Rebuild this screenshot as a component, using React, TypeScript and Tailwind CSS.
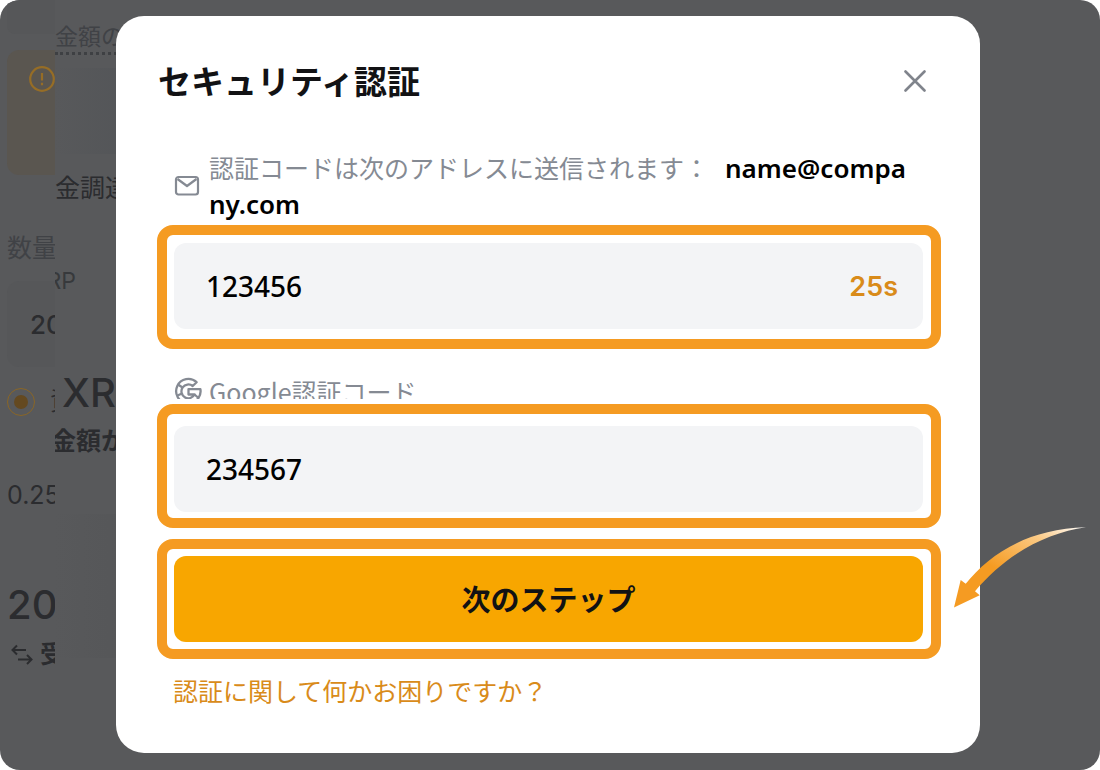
import React from "react";
import type { ReactNode } from "react";

interface HighlightProps {
  className?: string;
  children: ReactNode;
}

const Highlight: React.FC<HighlightProps> = ({ className, children }) => (
  <div
    className={`relative rounded-2xl border-10 border-[#f59b22] pr-2 pl-[7px] ${className ?? ""}`}
  >
    {children}
  </div>
);

const MailIcon = () => (
  <svg width="26" height="22" viewBox="0 0 26 22" fill="none" stroke="#858a93" strokeWidth="2.2" aria-hidden>
    <rect x="2" y="3" width="22" height="17.5" rx="2.5" />
    <path d="M3.500 5l9.500 7L22.500 5" strokeLinejoin="round" />
  </svg>
);

const GoogleIcon = () => (
  <svg width="28" height="28" viewBox="0 0 28 28" fill="none" stroke="#858a93" strokeWidth="2.300" aria-hidden>
    <path
      d="M22.600 5.200A12.200 12.200 0 1 0 26.400 12.200H14.500v5.300h6A6.900 6.900 0 1 1 18.700 9z"
      strokeLinejoin="round"
    />
    <path d="M4 7.500l4.500 3M3.500 18.500l4.500-2M20.500 17.500l4 3.500" />
  </svg>
);

const CloseIcon = () => (
  <svg width="22" height="22" viewBox="0 0 22 22" fill="none" stroke="#80848c" strokeWidth="2.6" strokeLinecap="round" aria-hidden>
    <path d="M1.500 1.500l19 19M20.500 1.500l-19 19" />
  </svg>
);

const SwapIcon = () => (
  <svg width="22" height="22" viewBox="0 0 22 22" fill="none" stroke="#2b2c2f" strokeWidth="2" aria-hidden>
    <path d="M15 6H2M6 1.500L1.500 6 6 10.500M7 15.500h13M16 11l4.500 4.500L16 20" />
  </svg>
);

const PointerArrow = () => (
  <svg
    className="absolute -top-[22px] left-full ml-[23px]"
    width="132"
    height="82"
    viewBox="0 0 132 82"
    aria-hidden
  >
    <defs>
      <linearGradient id="arrow" x1="0" y1="1" x2="1" y2="0">
        <stop offset="0.4" stopColor="#f59b22" />
        <stop offset="0.75" stopColor="#fbc983" />
        <stop offset="1" stopColor="#ffffff" />
      </linearGradient>
    </defs>
    <path
      fill="url(#arrow)"
      d="M0 80.500L6.700 53l5 3.700C35 28 72 2 132 .3 92 6 52 27 21 64.300l4.700 4z"
    />
  </svg>
);

// the order form that stays visible, dimmed, behind the dialog
const DimmedPage = () => (
  <div
    className="absolute inset-0 flex overflow-hidden rounded-[20px] font-['Inter','Noto_Sans_CJK_JP',sans-serif] whitespace-nowrap text-[#2b2c2f]"
    aria-hidden
  >
    <div className="w-[55px] shrink-0 overflow-hidden pl-[7px]">
      <div className="h-[34px] rounded-bl-lg bg-[#565759]" />
      <div className="mt-4 h-[125px] rounded-l-xl bg-[#5a5650] pt-4 pl-[22px]">
        <svg width="26" height="26" viewBox="0 0 26 26" fill="none" stroke="#966d26" strokeWidth="2.2">
          <circle cx="13" cy="13" r="11.800" />
          <path d="M13 7v7.500M13 16.800v2.400" />
        </svg>
      </div>
      <p className="mt-[55px] text-[25px] leading-9 text-[#404246]">数量</p>
      <div className="mt-[15px] flex h-[86px] items-center rounded-l-xl bg-[#565759] pl-[23px] text-[26px] font-medium">
        20
      </div>
      <label className="mt-[21px] flex h-7 items-center gap-[15px] text-[25px]">
        <input
          type="radio"
          defaultChecked
          tabIndex={-1}
          className="flex size-7 shrink-0 appearance-none items-center justify-center rounded-full border border-[#8a6626] before:size-[14px] before:rounded-full before:bg-[#644920]"
        />
        資
      </label>
      <p className="mt-[61px] text-[25px] leading-9">0.25</p>
      <p className="mt-[68px] text-[40px] leading-[48px] font-medium">20</p>
      <div className="mt-[10px] flex h-8 items-center gap-[7px] pl-1 text-[25px] font-bold">
        <span className="shrink-0">
          <SwapIcon />
        </span>
        受
      </div>
    </div>

    <div className="w-[80px] shrink-0 overflow-hidden pt-[22px]">
      <p className="border-b-3 border-dotted border-[#3e4043] text-[23px] leading-[30px] text-[#404246]">
        金額の
      </p>
      <div className="mt-[13px] h-[86px] bg-linear-to-r from-[#58595b] to-[#535558]" />
      <p className="mt-4 text-[25px] leading-9">金調達</p>
      <p className="mt-[57px] flex w-[21px] justify-end text-[23px] leading-9 text-[#37393c]">
        XRP
      </p>
      <p className="mt-[70px] pl-[7px] text-[40px] leading-[48px] font-medium">XR</p>
      <p className="-ml-1 mt-[6px] text-[25px] leading-9 font-bold">金額か</p>
      <div className="mt-[55px] h-[144px] bg-linear-to-r from-[#58595b] to-[#555658]" />
    </div>
  </div>
);

const fieldClass =
  "h-[86px] w-full rounded-xl bg-[#f3f4f6] px-8 font-['Noto_Sans',sans-serif] text-[28px] font-medium text-black outline-none";

export default function App() {
  return (
    <main className="relative min-h-screen rounded-[20px] bg-[#58595b] pt-4 pr-[120px] pb-[17px] pl-[116px] font-['Noto_Sans_CJK_JP',sans-serif]">
      <DimmedPage />

      <section
        role="dialog"
        aria-labelledby="dialog-title"
        className="relative rounded-[28px] bg-white pt-10 pr-[39px] pb-[45px] pl-[41px]"
      >
        <header className="flex h-[50px] items-center justify-between pr-[15px] pl-px">
          <h1 id="dialog-title" className="text-[33px] font-bold text-[#121214]">
            セキュリティ認証
          </h1>
          <button type="button" aria-label="閉じる">
            <CloseIcon />
          </button>
        </header>

        <form onSubmit={(e) => e.preventDefault()}>
          <label
            htmlFor="mail-code"
            className="mt-[43px] flex items-center gap-[9px] pr-7 pl-[17px]"
          >
            <span className="shrink-0">
              <MailIcon />
            </span>
            <span className="text-[25px] leading-9 break-all text-[#858a93]">
              認証コードは次のアドレスに送信されます：
              <span className="ml-4 font-['Noto_Sans',sans-serif] text-[26px] leading-8 font-semibold text-black">
                name@company.com
              </span>
            </span>
          </label>
          <Highlight className="mt-1 pt-2 pb-[10px]">
            <input id="mail-code" inputMode="numeric" defaultValue="123456" className={fieldClass} />
            <span className="absolute inset-y-0 right-[33px] flex items-center font-['Inter',sans-serif] text-[27px] font-semibold text-[#d98b1a]">
              25s
            </span>
          </Highlight>

          <label
            htmlFor="google-code"
            className="mt-[28px] flex h-[22px] gap-[7px] overflow-hidden pl-[17px] text-[25px] leading-7 text-[#858a93]"
          >
            <span className="shrink-0">
              <GoogleIcon />
            </span>
            Google認証コード
          </label>
          <Highlight className="mt-[5px] pt-3 pb-[6px]">
            <input id="google-code" inputMode="numeric" defaultValue="234567" className={fieldClass} />
          </Highlight>

          <Highlight className="mt-[11px] py-[7px]">
            <button
              type="submit"
              className="h-[86px] w-full rounded-xl bg-[#f8a600] text-[29px] font-bold text-[#121214]"
            >
              次のステップ
            </button>
            <PointerArrow />
          </Highlight>
        </form>

        <a
          href="#help"
          className="mt-[13px] ml-4 inline-block text-[25px] leading-9 text-[#d98b1a]"
        >
          認証に関して何かお困りですか？
        </a>
      </section>
    </main>
  );
}
